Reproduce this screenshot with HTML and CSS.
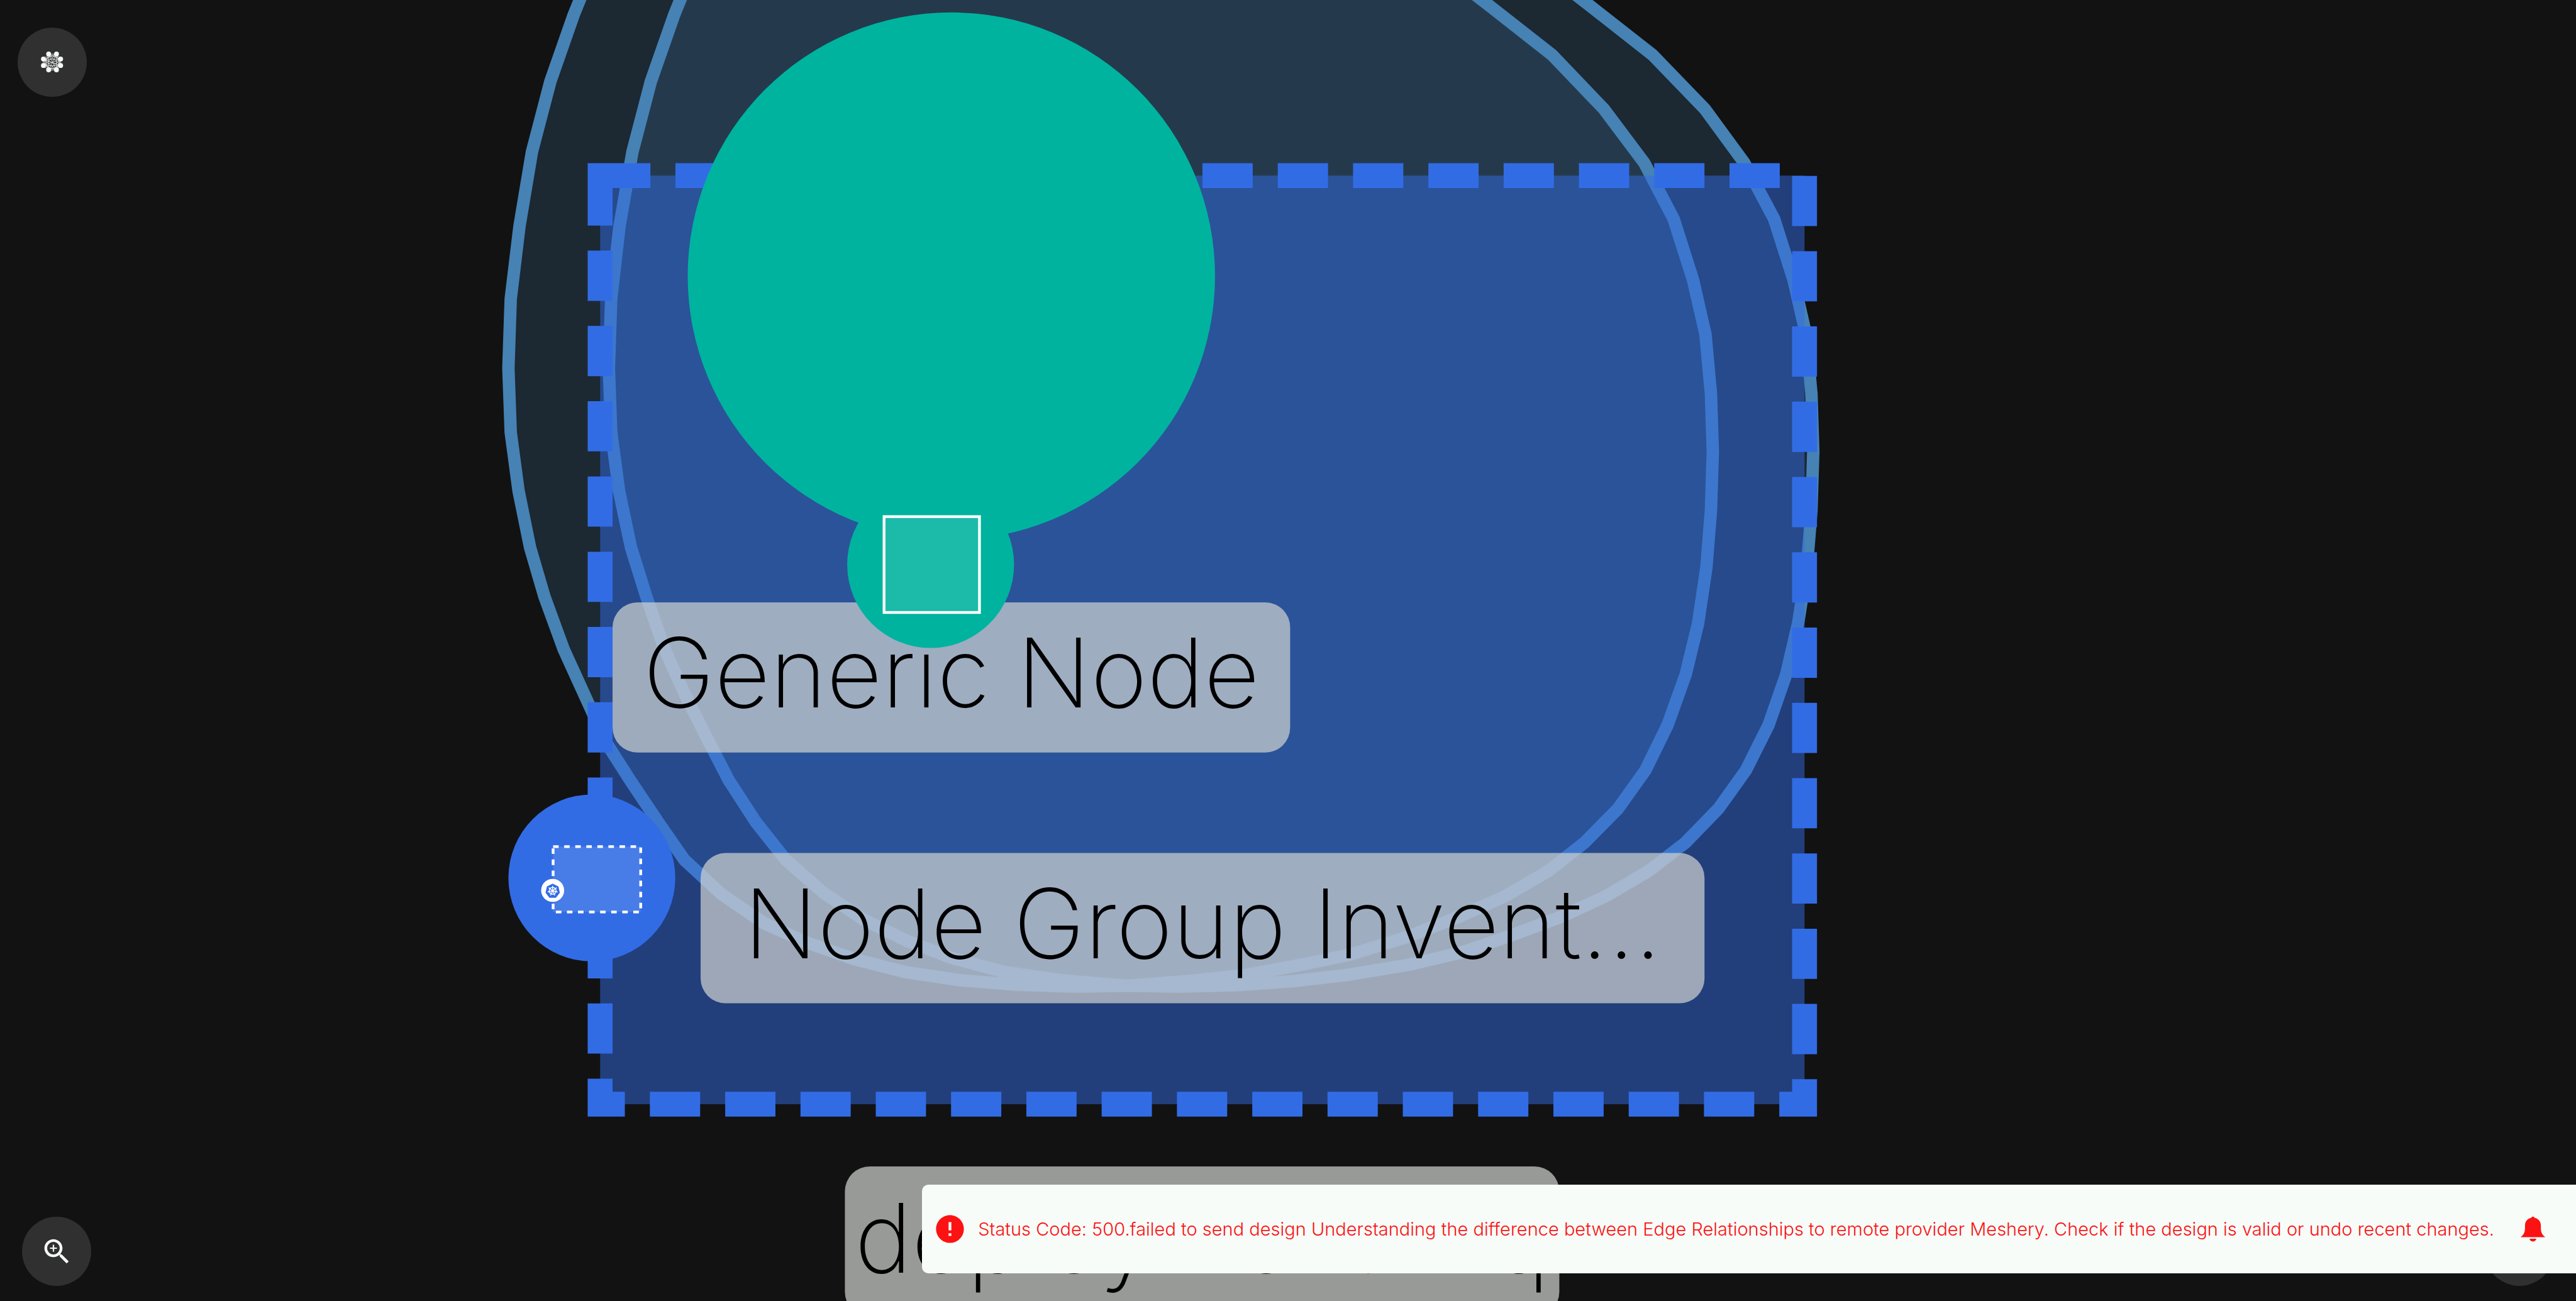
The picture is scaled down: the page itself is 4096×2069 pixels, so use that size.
FILE: index.html
```html
<!DOCTYPE html>
<html lang="en">
<head>
<meta charset="utf-8">
<title>Design canvas</title>
<meta name="viewport" content="width=device-width, initial-scale=1">
<link rel="stylesheet" href="styles.css">
</head>
<body>
<main class="workspace">
  <svg class="diagram" viewBox="0 0 5589 2823" preserveAspectRatio="xMinYMin slice" role="img" aria-label="Design diagram">
    <!-- nested hulls -->
    <path class="hull" d="M1290 -80L1244 34 1194 177 1154 330 1127 491 1108 649 1103 799 1108 938 1125 1065 1150 1188 1181 1294 1223 1409 1316 1613 1369 1696 1428 1784 1485 1866 1565 1940 1657 2003 1750 2045 1853 2081 1963 2109 2083 2127 2207 2137 2337 2141 2447 2139 2557 2141 2682 2138 2806 2129 2926 2115 3058 2093 3174 2066 3289 2026 3390 1988 3487 1943 3578 1889 3657 1828 3728 1755 3788 1671 3837 1573 3875 1464 3901 1353 3920 1232 3930 1107 3934 980 3930 855 3918 725 3891 607 3849 475 3784 353 3699 237 3585 119 3450 13 3330 -80Z"/>
    <path class="hull" d="M1508 -80L1462 34 1412 177 1372 330 1344 491 1326 649 1321 799 1326 938 1343 1065 1369 1188 1402 1294 1442 1409 1486 1507 1534 1602 1581 1693 1640 1784 1705 1866 1785 1936 1873 1995 1964 2040 2066 2079 2179 2109 2303 2127 2447 2139 2586 2128 2706 2115 2825 2093 2930 2071 3050 2034 3163 1990 3265 1945 3359 1890 3438 1828 3510 1755 3570 1671 3618 1573 3657 1464 3684 1353 3702 1232 3712 1107 3716 980 3712 855 3700 725 3673 607 3631 475 3567 353 3480 237 3367 119 3232 13 3112 -80Z"/>
    <!-- node group -->
    <rect class="group" x="1302" y="381" width="2613" height="2015"/>
    <circle class="node" cx="2064" cy="599" r="572"/>

    <rect class="plate" x="1329" y="1307" width="1470" height="326" rx="54"/>
    <text class="caption" x="2064" y="1535">Generic Node</text>
    <rect class="plate" x="1520" y="1851" width="2178" height="326" rx="54"/>
    <text class="caption" x="2609" y="2080">Node Group Invent...</text>
    <rect class="plate" x="1833" y="2531" width="1550" height="326" rx="54"/>
    <text class="caption" x="2608" y="2761">deployment-wq</text>

    <circle class="node" cx="2019" cy="1225" r="181"/>
    <rect class="glyph-box" x="1918" y="1121" width="207" height="208"/>

    <circle class="badge" cx="1284" cy="1905" r="181"/>
    <rect class="glyph-box dashed" x="1200" y="1837" width="190" height="142"/>
    <circle class="white" cx="1199" cy="1932" r="25"/>
    <path class="badge" d="M1199 1917.500L1211.500 1923.500 1214.600 1937 1206 1948H1192L1183.600 1937 1186.500 1923.500Z"/>
    <g class="wheel">
      <circle cx="1199" cy="1933" r="7.500"/>
      <path d="M1199 1933V1922M1199 1933L1207.600 1926.100M1199 1933L1209.700 1935.500M1199 1933L1203.800 1942.900M1199 1933L1194.200 1942.900M1199 1933L1188.300 1935.500M1199 1933L1190.400 1926.100"/>
    </g>
  </svg>

  <div class="controls controls-top">
    <button class="round" aria-label="Extensions">
      <svg class="icon mesh" viewBox="0 0 150 150" aria-hidden="true">
        <path class="mesh-lines" d="M67.300 57.500L84.300 57.500 93.300 68.500 93.300 82.500 84.300 92 67.300 92 56 82.500 56 68.500ZM67.300 57.500L93.300 68.500 84.300 92 56 82.500 67.300 57.500 93.300 82.500 67.300 92 56 68.500 84.300 57.500 93.300 82.500M84.300 57.500L56 82.500M67.300 57.500L84.300 92 56 68.500 93.300 82.500 56 82.500M84.300 57.500L67.300 92 93.300 68.500 56 68.500M67.300 57.500V92M84.300 57.500V92M56 68.500L93.300 82.500M56 82.500L93.300 68.500"/>
        <circle class="mesh-lines" cx="75.500" cy="75" r="14"/>
        <g>
          <circle cx="67.300" cy="57" r="5.300"/><circle cx="84.300" cy="57" r="5.300"/>
          <circle cx="93.300" cy="68" r="5.300"/><circle cx="93.300" cy="82" r="5.300"/>
          <circle cx="84.300" cy="91.500" r="5.300"/><circle cx="67.300" cy="91.500" r="5.300"/>
          <circle cx="56" cy="82" r="5.300"/><circle cx="56" cy="68" r="5.300"/>
        </g>
      </svg>
    </button>
  </div>
  <div class="controls controls-bottom">
    <button class="round" aria-label="Zoom in">
      <svg class="icon" viewBox="0 0 24 24" aria-hidden="true"><path d="M15.500 14h-.79l-.28-.27C15.410 12.590 16 11.110 16 9.500 16 5.910 13.090 3 9.500 3S3 5.910 3 9.500 5.910 16 9.500 16c1.610 0 3.090-.59 4.230-1.570l.27.28v.79l5 4.990L20.490 19l-4.990-5zm-6 0C7.010 14 5 11.990 5 9.500S7.010 5 9.500 5 14 7.010 14 9.500 11.990 14 9.500 14zm.5-7H9v2H7v1h2v2h1v-2h2V9h-2z"/></svg>
    </button>
    <button class="round" aria-label="Help"></button>
  </div>

  <div class="toast" role="alert">
    <svg class="icon" viewBox="0 0 24 24" aria-hidden="true"><path d="M12 2C6.480 2 2 6.480 2 12s4.480 10 10 10 10-4.480 10-10S17.520 2 12 2zm1 15h-2v-2h2v2zm0-4h-2V7h2v6z"/></svg>
    <p class="message">Status Code: 500.failed to send design Understanding the difference between Edge Relationships to remote provider Meshery. Check if the design is valid or undo recent changes.</p>
    <button class="bell" aria-label="Open notifications">
      <svg class="icon" viewBox="0 0 24 24" aria-hidden="true"><path d="M12 3c-.6 0-1.100.4-1.200 1C8 4.500 6.300 6.800 6.300 9.300v1.500c0 3-.4 5-3.200 7.100h17.800c-2.800-2.100-3.200-4.100-3.200-7.100V9.300c0-2.500-1.700-4.800-4.500-5.300-.1-.6-.6-1-1.200-1zM9.600 19h4.800a2.400 2 0 0 1-4.800 0z"/></svg>
    </button>
  </div>
</main>
</body>
</html>
```
FILE: styles.css
```css
* { box-sizing: border-box; }

body {
  margin: 0;
  background: #121212;
  font-family: Inter, "Noto Sans", sans-serif;
}

.workspace {
  position: relative;
  display: flex;
  flex-direction: column;
  justify-content: space-between;
  min-height: 100vh;
  overflow: hidden;
}

.diagram {
  position: absolute;
  inset: 0;
  width: 100%;
  height: 100%;
}

.hull {
  fill: rgba(70, 130, 180, 0.2);
  stroke: #4682b4;
  stroke-width: 27;
}

.group {
  fill: rgba(50, 108, 229, 0.5);
  stroke: #326ce5;
  stroke-width: 54;
  stroke-dasharray: 109 54.350;
}

.node { fill: #00b39f; }
.badge { fill: #326ce5; }
.white { fill: #fff; }
.plate { fill: rgba(209, 212, 208, 0.7); }

.caption {
  font-size: 209px;
  font-weight: 250;
  text-anchor: middle;
  fill: #000;
}

.glyph-box {
  fill: rgba(255, 255, 255, 0.11);
  stroke: #fff;
  stroke-width: 6;
}

.dashed { stroke-dasharray: 12 12; }

.wheel {
  fill: none;
  stroke: #fff;
  stroke-width: 2;
}

.controls {
  position: relative;
  display: flex;
  justify-content: space-between;
}

.controls-top { padding: 44px 28px; }
.controls-bottom { padding: 24px 35px; }

.round {
  display: flex;
  align-items: center;
  justify-content: center;
  width: 110px;
  height: 110px;
  padding: 0;
  border: 0;
  border-radius: 50%;
  background: #303030;
  color: #f6f8f8;
}

.icon {
  flex: none;
  display: block;
  width: 53px;
  height: 53px;
  fill: currentColor;
}

.mesh {
  width: 110px;
  height: 110px;
}

.mesh .mesh-lines {
  fill: none;
  stroke: currentColor;
  stroke-width: 1;
}

.toast {
  position: absolute;
  right: 0;
  bottom: 44px;
  display: flex;
  align-items: center;
  gap: 18px;
  height: 141px;
  padding: 0 42px 0 18px;
  border-radius: 10px 0 0 10px;
  background: #f7fcf9;
  color: #fc1212;
}

.message {
  margin: 0;
  font-size: 29px;
  font-weight: 300;
  line-height: 40px;
  white-space: nowrap;
}

.bell {
  margin-left: 17px;
  padding: 0;
  border: 0;
  background: none;
  color: inherit;
}
```
